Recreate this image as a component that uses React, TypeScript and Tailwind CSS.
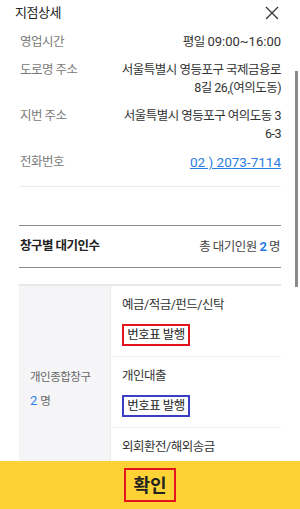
import React from 'react';

const font = { fontFamily: 'Roboto, "Noto Sans CJK KR", "Noto Sans", sans-serif' };

const InfoRow = ({ label, children }: { label: string; children: React.ReactNode }) => {
  return (
    <div className="flex items-start justify-between leading-[18px]">
      <span className="shrink-0 pl-px text-[12.5px] tracking-[-0.5px] text-[#7a7a7a]">{label}</span>
      <div className="whitespace-nowrap text-right text-[12.5px] tracking-[-0.5px] text-[#333]">{children}</div>
    </div>
  );
};

const WindowItem = ({ title, border }: { title: string; border: string }) => {
  return (
    <div className="border-b border-[#ececec] px-[11px] pt-[10px] pb-[10px]">
      <p className="text-[12.5px] leading-[18px] tracking-[-0.5px] text-[#333]">{title}</p>
      <button className={`mt-[10px] flex h-[22px] w-[68px] items-center justify-center border-2 bg-white text-[12.5px] tracking-[-0.5px] text-[#222] ${border}`}>
        번호표 발행
      </button>
    </div>
  );
};

export default function App() {
  return (
    <div className="relative flex h-[509px] w-[300px] flex-col overflow-hidden bg-white" style={font}>
      <div className="flex h-[25px] items-center justify-between pl-[15px] pr-[21px] pt-px">
        <h1 className="text-[13px] tracking-[-0.5px] text-[#222]">지점상세</h1>
        <svg width="14" height="14" viewBox="0 0 14 14" className="mt-[-1px]">
          <path d="M1 1 L13 13 M13 1 L1 13" stroke="#333" strokeWidth="1.3" fill="none" />
        </svg>
      </div>

      <div className="flex-1 overflow-hidden px-[19px]">
        <div className="mt-[8px] flex flex-col gap-[10px]">
          <InfoRow label="영업시간">
            평일 <span className="text-[13px] tracking-[0px]">09:00~16:00</span>
          </InfoRow>
          <InfoRow label="도로명 주소">
            서울특별시 영등포구 국제금융로
            <br />
            8길 26,(여의도동)
          </InfoRow>
          <InfoRow label="지번 주소">
            서울특별시 영등포구 여의도동 3
            <br />
            6-3
          </InfoRow>
          <InfoRow label="전화번호">
            <a className="text-[13.5px] tracking-[0px] text-[#2a7de6] underline">02 ) 2073-7114</a>
          </InfoRow>
        </div>

        <div className="mt-[14px] border-t border-[#ebebeb]" />

        <div className="mt-[38px] flex h-[43px] items-center justify-between border-y border-[#8c8c90] px-px">
          <span className="text-[12.5px] font-bold tracking-[-0.5px] text-[#222]">창구별 대기인수</span>
          <span className="text-[12.5px] tracking-[-0.5px] text-[#444]">
            총 대기인원 <span className="text-[13px] font-bold text-[#2a7de6]">2</span> 명
          </span>
        </div>

        <div className="mt-[16px] flex border-t-2 border-[#e8e8ea]">
          <div className="flex w-[91px] flex-col bg-[#f5f5f7] pl-[11px] pt-[82px]">
            <p className="text-[11.5px] leading-[18px] tracking-[-0.5px] text-[#666]">개인종합창구</p>
            <p className="mt-[6px] text-[11.5px] leading-[18px] text-[#666]">
              <span className="text-[13px] text-[#2a7de6]">2</span> 명
            </p>
          </div>
          <div className="flex-1 border-l border-[#ececec]">
            <WindowItem title="예금/적금/펀드/신탁" border="border-[#e3141d]" />
            <WindowItem title="개인대출" border="border-[#3b3fc4]" />
            <div className="px-[11px] pt-[10px]">
              <p className="text-[12.5px] leading-[18px] tracking-[-0.5px] text-[#333]">외회환전/해외송금</p>
              <button className="mt-[9px] h-[22px] w-[66px] rounded-[2px] border border-[#d5d5d5] bg-white" />
            </div>
          </div>
        </div>
      </div>

      <div className="flex h-[48px] shrink-0 items-center justify-center bg-[#fdd235]">
        <span className="flex h-[34px] w-[52px] items-center justify-center border-2 border-[#e3141d] text-[18px] font-bold text-[#222]">
          확인
        </span>
      </div>

      <div className="absolute left-[295px] top-[71px] h-[216px] w-[3px] bg-[#8a8a8a]" />
    </div>
  );
}
